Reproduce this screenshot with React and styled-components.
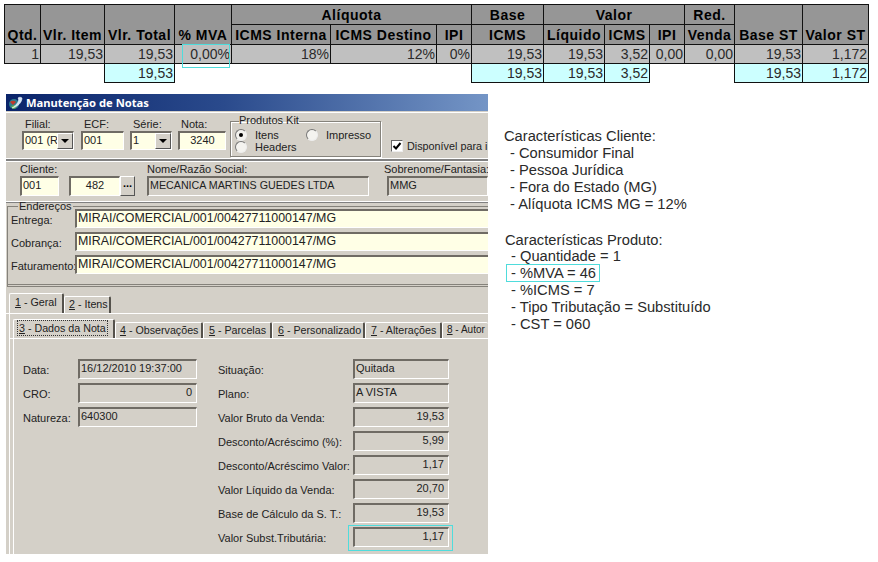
import React from "react";
import styled, { createGlobalStyle } from "styled-components";

const Global = createGlobalStyle`
  html, body { margin: 0; padding: 0; background: #fff; }
  body { width: 878px; height: 562px; overflow: hidden; font-family: "Liberation Sans", Arial, sans-serif; }
`;

const Page = styled.div`
  width: 878px;
  height: 562px;
  padding: 4px 0 0 4px;
  box-sizing: border-box;
  overflow: hidden;
`;

const Sheet = styled.table`
  border-collapse: collapse;
  table-layout: fixed;
  width: 864px;
  font-size: 14px;
  color: #222;
  td, th { border: 1px solid #111; padding: 0 1px; box-sizing: border-box; white-space: nowrap; overflow: visible; }
`;

const Head = styled.th`
  background: #969696;
  color: #000;
  font-weight: bold;
  font-size: 14px;
  letter-spacing: 0.5px;
  text-align: center;
  vertical-align: bottom;
  height: 20px;
  line-height: 18px;
  padding: 0 !important;
`;

const Cell = styled.td`
  background: ${(p) => (p.$tone === "total" ? "#ccffff" : "#c0c0c0")};
  text-align: right;
  height: 19px;
  line-height: 18px;
  position: relative;
  color: #2a2a2a;
  font-size: 14px;
`;

const Blank = styled.td`
  border: none !important;
  background: #fff;
`;

const CyanFrame = styled.span`
  position: absolute;
  z-index: 2;
  left: 7px;
  top: -1px;
  width: 48px;
  height: 24px;
  box-sizing: border-box;
  border: 1px solid #4fdcdc;
`;

const Main = styled.div`
  display: flex;
  align-items: flex-start;
  margin-top: 11px;
  margin-left: 1px;
`;

const Win = styled.div`
  width: 483px;
  height: 460px;
  flex: none;
  background: #d4d0c8;
  overflow: hidden;
  font-size: 11px;
  color: #222;
  box-sizing: border-box;
  border-left: 1px solid #fff;
  display: flex;
  flex-direction: column;
`;

const Title = styled.div`
  height: 17px;
  flex: none;
  display: flex;
  align-items: center;
  gap: 2px;
  padding-left: 2px;
  background: linear-gradient(90deg, #0a246a 0%, #2a4a8c 45%, #7495c6 100%);
  color: #fff;
  font-family: "Noto Sans", sans-serif;
  font-weight: bold;
  font-size: 11.2px;
  margin-bottom: 1px;
`;

const Row1 = styled.div`
  height: 47px;
  box-sizing: border-box;
  flex: none;
  display: flex;
  padding: 4px 0 0 16px;
  gap: 6px;
  border-top: 1px solid #fff;
  border-bottom: 1px solid #fff;
  box-shadow: 0 1px 0 #808080;
`;

const Field = styled.label`
  display: flex;
  flex-direction: column;
  width: ${(p) => p.$w}px;
  flex: none;
  margin-left: ${(p) => p.$ml || 0}px;
  span { height: 14px; line-height: 14px; padding-left: ${(p) => p.$lp ?? 3}px; white-space: nowrap; }
`;

const Sunken = styled.div`
  box-sizing: border-box;
  height: ${(p) => p.$h || 20}px;
  width: ${(p) => (p.$w ? p.$w + "px" : "100%")};
  flex: none;
  background: ${(p) => (p.$ro ? "#d4d0c8" : "#ffffe6")};
  border-top: 2px solid #6f6b64;
  border-left: 2px solid #6f6b64;
  border-right: 1px solid #fff;
  border-bottom: 1px solid #fff;
  padding: 0 ${(p) => (p.$right ? 4 : 1)}px 2px 1px;
  font-size: ${(p) => p.$fs || 11}px;
  line-height: 14px;
  text-align: ${(p) => (p.$right ? "right" : p.$center ? "center" : "left")};
  white-space: nowrap;
  overflow: hidden;
  position: relative;
  color: #222;
`;

const Select = styled(Sunken)`
  padding-right: 17px;
`;

const Arrow = styled.i`
  position: absolute;
  right: 0;
  top: 0;
  width: 16px;
  height: 16px;
  background: #d4d0c8;
  border: 1px solid;
  border-color: #fff #555 #555 #fff;
  box-sizing: border-box;
  &::after {
    content: "";
    position: absolute;
    left: 3px;
    top: 5px;
    border: 4px solid transparent;
    border-top: 4px solid #000;
    border-bottom: 0;
  }
`;

const Group = styled.fieldset`
  margin: -1px 0 0 -2px;
  padding: 2px 0 0 4px;
  width: 151px;
  height: 41px;
  box-sizing: border-box;
  flex: none;
  border: 1px solid #85827b;
  box-shadow: 1px 1px 0 #fff, inset 1px 1px 0 #fff;
  display: grid;
  grid-template-columns: 71px 1fr;
  grid-auto-rows: 12px;
  min-width: 0;
  legend { padding: 0; margin-left: 4px; line-height: 9px; height: 11px; }
`;

const Option = styled.div`
  display: flex;
  align-items: center;
  gap: 8px;
  line-height: 12px;
  white-space: nowrap;
`;

const Radio = styled.b`
  width: 12px;
  height: 12px;
  flex: none;
  border-radius: 50%;
  background: #f4f3ef;
  border: 1px solid;
  border-color: #777 #eee #eee #777;
  box-sizing: border-box;
  position: relative;
  &::after {
    content: "";
    display: ${(p) => (p.$on ? "block" : "none")};
    position: absolute;
    left: 3px;
    top: 3px;
    width: 4px;
    height: 4px;
    border-radius: 50%;
    background: #000;
  }
`;

const CheckWrap = styled.div`
  display: flex;
  align-items: center;
  gap: 4px;
  margin: 22px 0 0 4px;
  height: 13px;
  white-space: nowrap;
  font-size: 10.8px;
`;

const Check = styled.b`
  width: 12px;
  height: 12px;
  flex: none;
  background: #fff;
  border: 1px solid;
  border-color: #666 #eee #eee #666;
  box-sizing: border-box;
  display: grid;
  place-items: center;
`;

const Row2 = styled.div`
  height: 42px;
  flex: none;
  margin-top: 1px;
  display: flex;
  padding: 1px 0 0 14px;
  border-top: 1px solid #808080;
  border-bottom: 1px solid #fff;
  box-shadow: inset 0 1px 0 #fff, 0 1px 0 #808080;
  box-sizing: border-box;
`;

const Lookup = styled.div`
  display: flex;
  margin-top: 14px;
  margin-left: 10px;
  flex: none;
`;

const Dots = styled.div`
  width: 15px;
  height: 20px;
  box-sizing: border-box;
  background: #d4d0c8;
  border: 1px solid;
  border-color: #fff #555 #555 #fff;
  font-weight: bold;
  line-height: 13px;
  text-align: center;
  color: #000;
  font-size: 11px;
`;

const Address = styled.fieldset`
  margin: 1px 0 0 1px;
  padding: 0 0 0 3px;
  height: 84px;
  box-sizing: border-box;
  flex: none;
  min-width: 0;
  border: 0;
  border-top: 1px solid #85827b;
  border-left: 1px solid #85827b;
  border-bottom: 3px double #85827b;
  display: flex;
  flex-direction: column;
  gap: 4px;
  legend { margin-left: 7px; padding: 0 1px; line-height: 6px; height: 6px; }
`;

const AddressRow = styled.div`
  display: flex;
  align-items: center;
  height: 19px;
  span { width: 64px; flex: none; white-space: nowrap; padding-top: 3px; }
`;

const TabStrip = styled.div`
  display: flex;
  align-items: flex-end;
  padding-left: ${(p) => p.$pl}px;
  height: ${(p) => p.$h}px;
  flex: none;
  border-bottom: 1px solid #fff;
  white-space: nowrap;
`;

const Tab = styled.div`
  box-sizing: border-box;
  width: ${(p) => p.$w}px;
  flex: none;
  height: ${(p) => (p.$on ? p.$h : p.$h - 3)}px;
  background: #d4d0c8;
  border: 1px solid;
  border-color: #fff #55524c transparent #fff;
  border-right-width: 2px;
  border-bottom: 0;
  border-radius: 2px 2px 0 0;
  padding-left: ${(p) => p.$pad ?? 5}px;
  font-size: ${(p) => p.$fs || 10.7}px;
  line-height: ${(p) => (p.$on ? p.$h - 3 : p.$h - 5)}px;
  overflow: hidden;
  u { text-decoration: underline; }
`;

const LastTab = styled(Tab)`
  border-right: 0;
`;

const Focus = styled.span`
  outline: 1px dotted #333;
  outline-offset: 1px;
`;

const TabBody = styled.div`
  flex: 1;
  display: flex;
  flex-direction: column;
  margin-left: 3px;
  border-left: 1px solid #fff;
`;

const Pane = styled.div`
  margin-left: 3px;
  flex: 1;
  display: grid;
  grid-template-columns: 195px 1fr;
  padding-top: 20px;
  border-left: 1px solid #fff;
`;

const Column = styled.div`
  display: flex;
  flex-direction: column;
  gap: 4px;
`;

const DataRow = styled.div`
  display: flex;
  align-items: center;
  height: 20px;
  position: relative;
  padding-left: 9px;
  span { width: ${(p) => p.$lw}px; flex: none; white-space: nowrap; padding-top: 1px; }
`;

const FieldFrame = styled.i`
  position: absolute;
  left: 139px;
  top: -2px;
  width: 105px;
  height: 26px;
  box-sizing: border-box;
  border: 1px solid #4fdcdc;
`;

const Notes = styled.div`
  margin: 34px 0 0 16px;
  font-size: 14.7px;
  line-height: 17px;
  color: #2a2a2a;
  white-space: nowrap;
`;

const NoteHead = styled.div`
  margin-top: ${(p) => p.$mt || 0}px;
  margin-bottom: ${(p) => p.$mb || 0}px;
  margin-left: ${(p) => p.$ml || 0}px;
`;

const NoteItem = styled.div`
  position: relative;
  padding-left: ${(p) => p.$pl || 6}px;
`;

const NoteFrame = styled.i`
  position: absolute;
  left: 2px;
  top: -1px;
  width: 94px;
  height: 18px;
  box-sizing: border-box;
  border: 1px solid #4fdcdc;
`;

const Logo = () => (
  <svg width="16" height="14" viewBox="0 0 16 14">
    <circle cx="6" cy="8" r="5" fill="#2f7d8c" />
    <path d="M2 6a4 4 0 0 1 6 0l-3 3z" fill="#c0392b" />
    <path d="M3 10l4-1 1 3-3 1z" fill="#5fb04a" />
    <path d="M4 12C9 11 14 7 14 2 13 1 11 1 10 2 12 4 9 9 4 12z" fill="#cfe4f7" stroke="#fff" strokeWidth=".5" />
  </svg>
);

const Tick = () => (
  <svg width="10" height="10" viewBox="0 0 10 10">
    <path d="M1.5 5 4 7.5 8.5 2" fill="none" stroke="#000" strokeWidth="2" />
  </svg>
);

const left = [
  ["Data:", "16/12/2010 19:37:00", false],
  ["CRO:", "0", true],
  ["Natureza:", "640300", false],
];
const right = [
  ["Situação:", "Quitada", false],
  ["Plano:", "A VISTA", false],
  ["Valor Bruto da Venda:", "19,53", true],
  ["Desconto/Acréscimo (%):", "5,99", true],
  ["Desconto/Acréscimo Valor:", "1,17", true],
  ["Valor Líquido da Venda:", "20,70", true],
  ["Base de Cálculo da S. T.:", "19,53", true],
  ["Valor Subst.Tributária:", "1,17", true, true],
];
const addresses = ["Entrega:", "Cobrança:", "Faturamento:"];
const ADDRESS = "MIRAI/COMERCIAL/001/00427711000147/MG";
const widths = [36, 64, 70, 57, 99, 106, 35, 72, 61, 45, 35, 50, 68, 66];

export default function App() {
  return (
    <Page>
      <Global />
      <Sheet>
        <colgroup>{widths.map((w, i) => <col key={i} style={{ width: w }} />)}</colgroup>
        <thead>
          <tr>
            <Head rowSpan={2}>Qtd.</Head>
            <Head rowSpan={2}>Vlr. Item</Head>
            <Head rowSpan={2}>Vlr. Total</Head>
            <Head rowSpan={2}>% MVA</Head>
            <Head colSpan={3}>Alíquota</Head>
            <Head>Base</Head>
            <Head colSpan={3}>Valor</Head>
            <Head>Red.</Head>
            <Head rowSpan={2}>Base ST</Head>
            <Head rowSpan={2}>Valor ST</Head>
          </tr>
          <tr>
            <Head>ICMS Interna</Head>
            <Head>ICMS Destino</Head>
            <Head>IPI</Head>
            <Head>ICMS</Head>
            <Head>Líquido</Head>
            <Head>ICMS</Head>
            <Head>IPI</Head>
            <Head>Venda</Head>
          </tr>
        </thead>
        <tbody>
          <tr>
            <Cell>1</Cell>
            <Cell>19,53</Cell>
            <Cell>19,53</Cell>
            <Cell>0,00%<CyanFrame /></Cell>
            <Cell>18%</Cell>
            <Cell>12%</Cell>
            <Cell>0%</Cell>
            <Cell>19,53</Cell>
            <Cell>19,53</Cell>
            <Cell>3,52</Cell>
            <Cell>0,00</Cell>
            <Cell>0,00</Cell>
            <Cell>19,53</Cell>
            <Cell>1,172</Cell>
          </tr>
          <tr>
            <Blank colSpan={2} />
            <Cell $tone="total">19,53</Cell>
            <Blank colSpan={4} />
            <Cell $tone="total">19,53</Cell>
            <Cell $tone="total">19,53</Cell>
            <Cell $tone="total">3,52</Cell>
            <Blank colSpan={2} />
            <Cell $tone="total">19,53</Cell>
            <Cell $tone="total">1,172</Cell>
          </tr>
        </tbody>
      </Sheet>
      <Main>
        <Win>
          <Title><Logo />Manutenção de Notas</Title>
          <Row1>
            <Field $w={52}><span>Filial:</span><Select $h={19}>001 (RI<Arrow /></Select></Field>
            <Field $w={43} $ml={1}><span>ECF:</span><Sunken $h={19}>001</Sunken></Field>
            <Field $w={42}><span>Série:</span><Select $h={19}>1<Arrow /></Select></Field>
            <Field $w={48}><span>Nota:</span><Sunken $h={19} $center>3240</Sunken></Field>
            <Group>
              <legend>Produtos Kit</legend>
              <Option><Radio $on />Itens</Option>
              <Option><Radio />Impresso</Option>
              <Option><Radio />Headers</Option>
            </Group>
            <CheckWrap><Check><Tick /></Check>Disponível para i</CheckWrap>
          </Row1>
          <Row2>
            <Field $w={39} $lp={0}><span>Cliente:</span><Sunken>001</Sunken></Field>
            <Lookup>
              <Sunken $w={51} $center>482</Sunken>
              <Dots>...</Dots>
            </Lookup>
            <Field $w={222} $ml={12} $lp={0}><span>Nome/Razão Social:</span><Sunken $ro $fs={10.7}>MECANICA MARTINS GUEDES LTDA</Sunken></Field>
            <Field $w={101} $ml={18} $lp={0}><span style={{ marginLeft: -3 }}>Sobrenome/Fantasia:</span><Sunken $ro>MMG</Sunken></Field>
          </Row2>
          <Address>
            <legend>Endereços</legend>
            {addresses.map((a) => (
              <AddressRow key={a}><span>{a}</span><Sunken $h={19} $fs={12.4}>{ADDRESS}</Sunken></AddressRow>
            ))}
          </Address>
          <TabStrip $pl={3} $h={26}>
            <Tab $on $w={55} $h={20}><u>1</u> - Geral</Tab>
            <Tab $w={47} $h={20} $pad={4}><u>2</u> - Itens</Tab>
          </TabStrip>
          <TabBody>
            <TabStrip $pl={3} $h={24}>
              <Tab $on $w={102} $h={19}><Focus><u>3</u> - Dados da Nota</Focus></Tab>
              <Tab $w={88} $h={19} $pad={4}><u>4</u> - Observações</Tab>
              <Tab $w={69} $h={19}><u>5</u> - Parcelas</Tab>
              <Tab $w={93} $h={19}><u>6</u> - Personalizado</Tab>
              <Tab $w={77} $h={19}><u>7</u> - Alterações</Tab>
              <LastTab $w={46} $h={19} $pad={4} $fs={10}><u>8</u> - Autor</LastTab>
            </TabStrip>
            <Pane>
              <Column>
                {left.map(([l, v, r]) => (
                  <DataRow key={l} $lw={55}>
                    <span>{l}</span><Sunken $ro $w={119} $right={r}>{v}</Sunken>
                  </DataRow>
                ))}
              </Column>
              <Column>
                {right.map(([l, v, r, mark]) => (
                  <DataRow key={l} $lw={135}>
                    <span>{l}</span><Sunken $ro $w={96} $right={r}>{v}</Sunken>
                    {mark && <FieldFrame />}
                  </DataRow>
                ))}
              </Column>
            </Pane>
          </TabBody>
        </Win>
        <Notes>
          <NoteHead>Características Cliente:</NoteHead>
          <NoteItem>- Consumidor Final</NoteItem>
          <NoteItem>- Pessoa Jurídica</NoteItem>
          <NoteItem>- Fora do Estado (MG)</NoteItem>
          <NoteItem>- Alíquota ICMS MG = 12%</NoteItem>
          <NoteHead $mt={19} $mb={-1} $ml={1}>Características Produto:</NoteHead>
          <NoteItem $pl={7}>- Quantidade = 1</NoteItem>
          <NoteItem $pl={7}><NoteFrame />- %MVA = 46</NoteItem>
          <NoteItem $pl={7}>- %ICMS = 7</NoteItem>
          <NoteItem $pl={7}>- Tipo Tributação = Substituído</NoteItem>
          <NoteItem $pl={7}>- CST = 060</NoteItem>
        </Notes>
      </Main>
    </Page>
  );
}
